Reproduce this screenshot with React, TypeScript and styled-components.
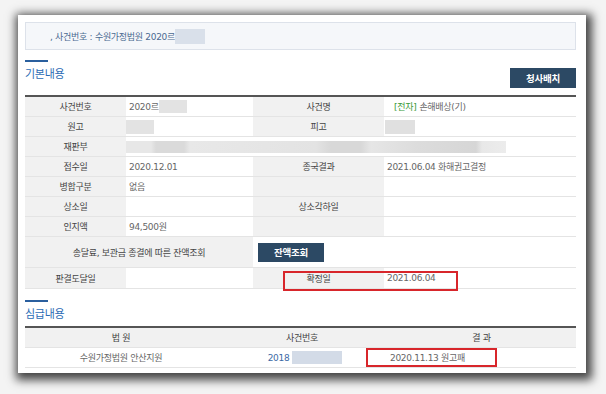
import React from 'react';
import styled, { createGlobalStyle } from 'styled-components';

const GlobalStyle = createGlobalStyle`
  html, body { margin: 0; padding: 0; background: #f4f4f4; }
  body { font-family: "DejaVu Sans", "Noto Sans CJK KR", sans-serif; }
`;

const Page = styled.div`
  width: 606px;
  height: 394px;
  box-sizing: border-box;
  padding: 15px 0 0 18px;
  background: #f4f4f4;
  overflow: hidden;
`;

const Panel = styled.div`
  width: 568px;
  height: 358px;
  box-sizing: border-box;
  background: #fff;
  padding: 7px 10px 0 7px;
  box-shadow: 2px 3px 9px 4px rgba(0, 0, 0, 0.72);
  display: flex;
  flex-direction: column;
`;

const InfoBox = styled.div`
  height: 28px;
  box-sizing: border-box;
  border: 1px solid #dde2ea;
  background: #f5f7fa;
  display: flex;
  align-items: center;
  padding-left: 24px;
  font-size: 9px;
  letter-spacing: -0.3px;
  color: #4b6a91;
`;

const Redact = styled.span<{ $w: number; $h: number; $bg?: string }>`
  display: inline-block;
  width: ${(p) => p.$w}px;
  height: ${(p) => p.$h}px;
  background: ${(p) => p.$bg || '#e3e3e3'};
  vertical-align: middle;
`;

const SectionHead = styled.div<{ $mt: number; $h: number }>`
  margin-top: ${(p) => p.$mt}px;
  height: ${(p) => p.$h}px;
  display: flex;
  justify-content: space-between;
  align-items: flex-start;
`;

const TitleBlock = styled.div`
  display: flex;
  flex-direction: column;
`;

const TitleBar = styled.div`
  width: 23px;
  height: 2px;
  background: #2a5f9e;
`;

const Title = styled.div`
  margin-top: 4px;
  font-family: "Noto Sans CJK KR", sans-serif;
  font-size: 11px;
  line-height: 14px;
  letter-spacing: -0.3px;
  color: #2b6cb5;
`;

const NavyButton = styled.button<{ $mt?: number; $h?: number }>`
  margin-top: ${(p) => p.$mt || 0}px;
  width: 66px;
  height: ${(p) => p.$h || 20}px;
  border: none;
  padding: 0;
  background: #2c4964;
  color: #fff;
  font-family: "Noto Sans CJK KR", sans-serif;
  font-weight: 700;
  font-size: 9.5px;
  letter-spacing: -0.3px;
`;

const TableWrap = styled.div<{ $mt: number }>`
  position: relative;
  margin-top: ${(p) => p.$mt}px;
`;

const InfoGrid = styled.div<{ $cols: string }>`
  display: grid;
  grid-template-columns: ${(p) => p.$cols};
  border-top: 2px solid #555;
  font-size: 9px;
  letter-spacing: -0.3px;
`;

const Cell = styled.div<{ $h?: number; $span?: number; $label?: boolean; $align?: string; $pl?: number }>`
  box-sizing: border-box;
  height: ${(p) => p.$h || 20}px;
  grid-column: span ${(p) => p.$span || 1};
  border-bottom: 1px solid #e4e4e4;
  background: ${(p) => (p.$label ? '#f1f1f1' : '#fff')};
  color: ${(p) => (p.$label ? '#444' : '#666')};
  display: flex;
  align-items: center;
  justify-content: ${(p) => p.$align || (p.$label ? 'center' : 'flex-start')};
  padding-left: ${(p) => (p.$pl !== undefined ? p.$pl : p.$label ? 0 : 3)}px;
  white-space: nowrap;
`;

const Tag = styled.span`
  color: #3a9a3a;
  margin-left: 7px;
  margin-right: 3px;
`;

const CaseLink = styled.span`
  color: #3d6aa5;
`;

const RedBox = styled.div<{ $l: number; $t: number; $w: number; $h: number }>`
  position: absolute;
  left: ${(p) => p.$l}px;
  top: ${(p) => p.$t}px;
  width: ${(p) => p.$w}px;
  height: ${(p) => p.$h}px;
  box-sizing: border-box;
  border: 2px solid #d8262b;
  pointer-events: none;
`;

const Blur = styled.span`
  display: inline-block;
  width: 380px;
  height: 12px;
  vertical-align: middle;
  background: linear-gradient(
    90deg,
    #e7e7e7 0px,
    #e7e7e7 25px,
    #dadada 30px,
    #dadada 58px,
    #e8e8e8 64px,
    #e3e3e3 190px,
    #d8d8d8 205px,
    #d8d8d8 235px,
    #e6e6e6 245px,
    #dcdcdc 292px,
    #d6d6d6 350px,
    #e8e8e8 356px,
    #ececec 380px
  );
`;

export default function App() {
  return (
    <>
      <GlobalStyle />
      <Page>
        <Panel>
          <InfoBox>
            <span>, 사건번호 : 수원가정법원 2020르</span>
            <Redact $w={30} $h={15} $bg="#d9e0ea" />
          </InfoBox>

          <SectionHead $mt={10} $h={28}>
            <TitleBlock>
              <TitleBar />
              <Title>기본내용</Title>
            </TitleBlock>
            <NavyButton $mt={8}>청사배치</NavyButton>
          </SectionHead>

          <TableWrap $mt={7}>
            <InfoGrid $cols="101px 127px 131px 192px">
              <Cell $label>사건번호</Cell>
              <Cell>
                2020르
                <Redact $w={28} $h={13} />
              </Cell>
              <Cell $label>사건명</Cell>
              <Cell>
                <Tag>[전자]</Tag>손해배상(기)
              </Cell>

              <Cell $label>원고</Cell>
              <Cell $pl={0}>
                <Redact $w={28} $h={14} />
              </Cell>
              <Cell $label>피고</Cell>
              <Cell $pl={1}>
                <Redact $w={30} $h={14} $bg="#e0e0e0" />
              </Cell>

              <Cell $label>재판부</Cell>
              <Cell $span={3} $pl={0}>
                <Blur />
              </Cell>

              <Cell $label>접수일</Cell>
              <Cell>2020.12.01</Cell>
              <Cell $label>종국결과</Cell>
              <Cell>2021.06.04 화해권고결정</Cell>

              <Cell $label>병합구분</Cell>
              <Cell>없음</Cell>
              <Cell $label />
              <Cell />

              <Cell $label>상소일</Cell>
              <Cell />
              <Cell $label>상소각하일</Cell>
              <Cell />

              <Cell $label>인지액</Cell>
              <Cell>94,500원</Cell>
              <Cell $label />
              <Cell />

              <Cell $label $span={2} $h={31}>
                송달료, 보관금 종결에 따른 잔액조회
              </Cell>
              <Cell $span={2} $h={31} $pl={5}>
                <NavyButton $h={19}>잔액조회</NavyButton>
              </Cell>

              <Cell $label $h={21}>판결도달일</Cell>
              <Cell $h={21} />
              <Cell $label $h={21}>확정일</Cell>
              <Cell $h={21}>2021.06.04</Cell>
            </InfoGrid>
            <RedBox $l={258} $t={176} $w={175} $h={20} />
          </TableWrap>

          <SectionHead $mt={11} $h={20}>
            <TitleBlock>
              <TitleBar />
              <Title>심급내용</Title>
            </TitleBlock>
          </SectionHead>

          <TableWrap $mt={6}>
            <InfoGrid $cols="192px 170px 189px">
              <Cell $label>법 원</Cell>
              <Cell $label>사건번호</Cell>
              <Cell $label>결 과</Cell>

              <Cell $align="center" $pl={0}>수원가정법원 안산지원</Cell>
              <Cell $align="center" $pl={6}>
                <CaseLink>2018</CaseLink>
                <Redact $w={50} $h={13} $bg="#d3dbe7" style={{ marginLeft: 3 }} />
              </Cell>
              <Cell>2020.11.13 원고패</Cell>
            </InfoGrid>
            <RedBox $l={341} $t={22} $w={131} $h={19} />
          </TableWrap>
        </Panel>
      </Page>
    </>
  );
}
